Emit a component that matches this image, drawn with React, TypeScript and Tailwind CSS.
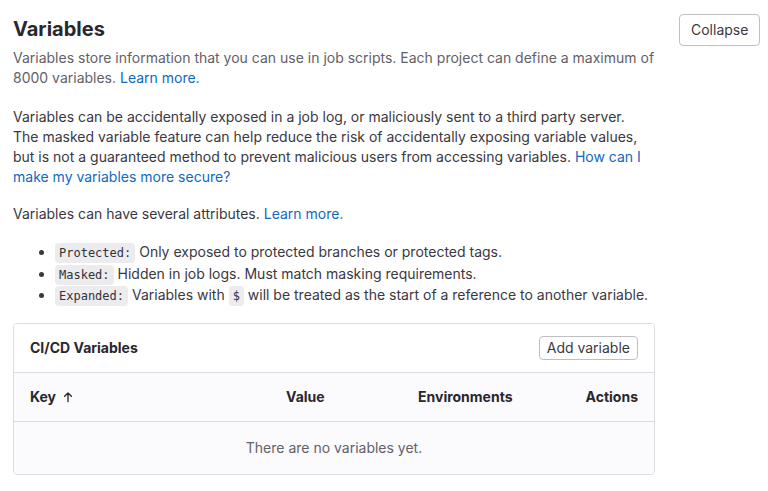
import React from 'react';

const Code = ({ children }: { children: React.ReactNode }) => (
    <code className="rounded-[4px] bg-[#ececef] px-[4px] py-[3px] align-baseline font-['DejaVu_Sans_Mono',monospace] text-[12px] leading-none text-[#333238]">
        {children}
    </code>
);

const Link = ({ children }: { children: React.ReactNode }) => (
    <a href="#" className="text-[#1068bf]">{children}</a>
);

export default function App() {
    return (
        <div className="min-h-[491px] bg-white font-['Inter',sans-serif] text-[14px] leading-[20px] text-[#3a383f]">
            <div className="flex items-start gap-[24px] pl-[13px] pr-[7px] pt-[14px]">
                <div className="w-[642px] shrink-0">
                    <h2 className="pt-[1px] text-[20px] font-bold leading-[28px] text-[#28272d]">Variables</h2>
                    <p className="mt-[5px] text-[#626168]">
                        Variables store information that you can use in job scripts. Each project can define a maximum of 8000 variables.{' '}
                        <Link>Learn more.</Link>
                    </p>

                    <p className="mt-[19px] pr-[4px]">
                        Variables can be accidentally exposed in a job log, or maliciously sent to a third party server. The masked variable feature can help reduce the risk of accidentally exposing variable values, but is not a guaranteed method to prevent malicious users from accessing variables.{' '}
                        <Link>How can I make my variables more secure?</Link>
                    </p>

                    <p className="mt-[17px]">
                        Variables can have several attributes. <Link>Learn more.</Link>
                    </p>

                    <ul className="mt-[17px] list-disc pl-[42px] leading-[21.5px]">
                        <li className="h-[21.5px]"><Code>Protected:</Code> Only exposed to protected branches or protected tags.</li>
                        <li className="h-[21.5px]"><Code>Masked:</Code> Hidden in job logs. Must match masking requirements.</li>
                        <li className="h-[21.5px]"><Code>Expanded:</Code> Variables with <Code>$</Code> will be treated as the start of a reference to another variable.</li>
                    </ul>

                    <div className="mt-[17px] overflow-hidden rounded-[4px] border border-[#dcdcde]">
                        <div className="flex h-[49px] items-center justify-between border-b border-[#dcdcde] bg-white pl-[16px] pr-[16px]">
                            <span className="font-bold text-[#28272d]">CI/CD Variables</span>
                            <button className="h-[24px] rounded-[4px] border border-[#bfbfc3] bg-white px-[7px] text-[14px] leading-[20px] text-[#3a383f]">
                                Add variable
                            </button>
                        </div>
                        <div className="grid h-[49px] grid-cols-[256px_132px_1fr_120px] items-center border-b border-[#dcdcde] bg-[#fbfafd] px-[16px] font-bold text-[#28272d]">
                            <span className="flex items-center gap-[6px]">
                                Key
                                <svg width="12" height="12" viewBox="0 0 16 16" fill="none" stroke="currentColor" strokeWidth="1.8" strokeLinecap="round" strokeLinejoin="round">
                                    <path d="M8 14V2.5M3.5 7L8 2.5 12.5 7" />
                                </svg>
                            </span>
                            <span>Value</span>
                            <span>Environments</span>
                            <span className="text-right">Actions</span>
                        </div>
                        <div className="flex h-[52px] items-center justify-center bg-[#fbfafd] text-[#626168]">
                            There are no variables yet.
                        </div>
                    </div>
                </div>
                <button className="h-[32px] rounded-[4px] border border-[#bfbfc3] bg-white px-[11px] text-[14px] text-[#3a383f]">
                    Collapse
                </button>
            </div>
        </div>
    );
}
